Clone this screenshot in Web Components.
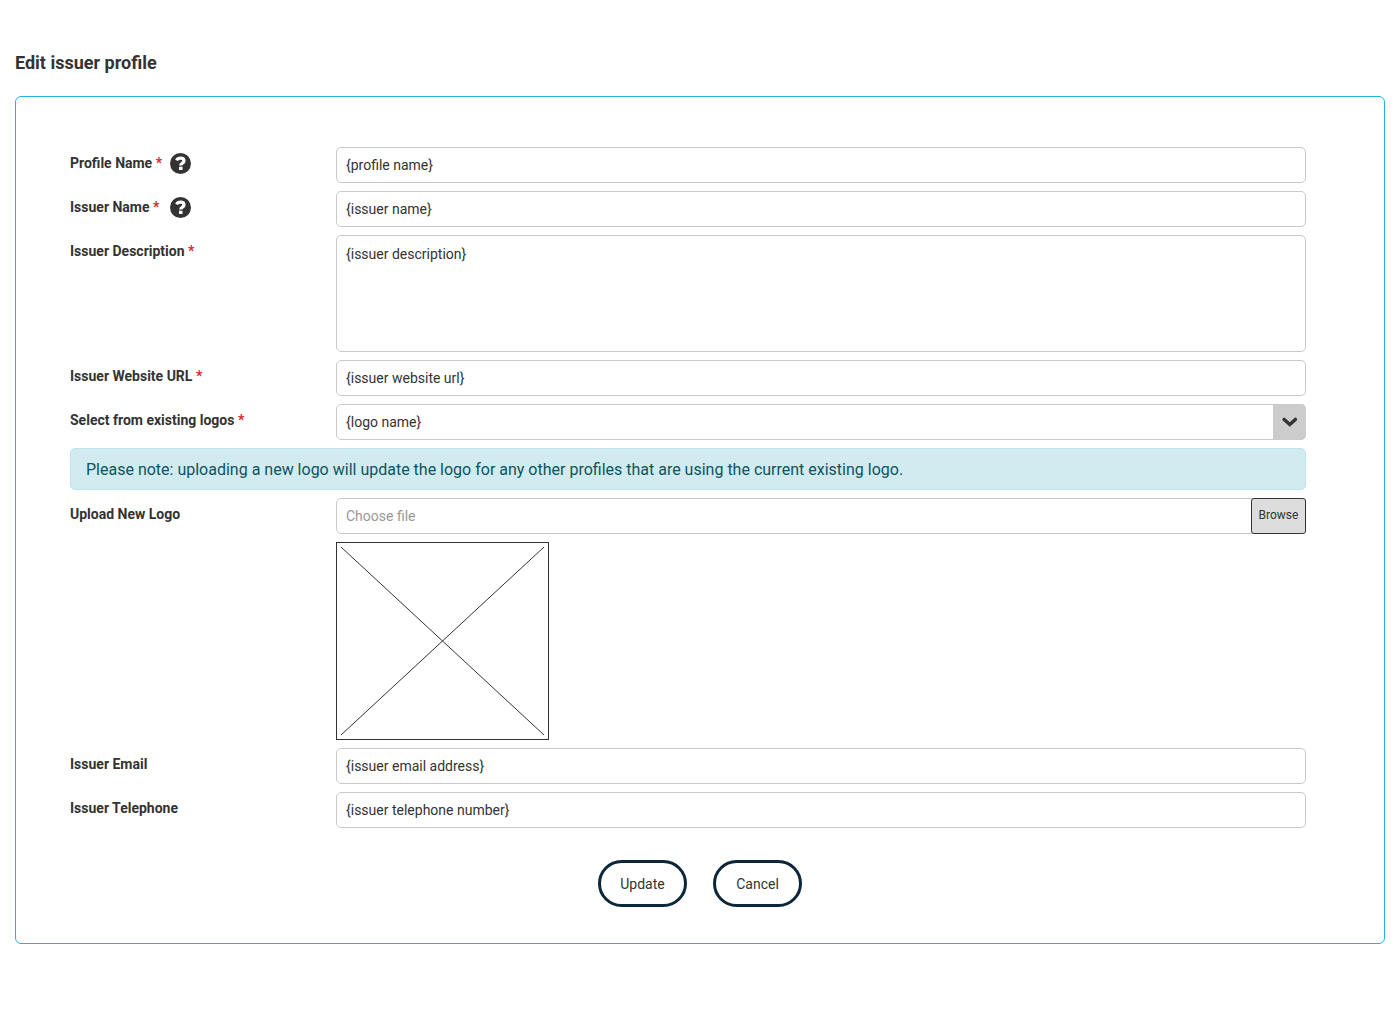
<!DOCTYPE html>
<html lang="en">
<head>
<meta charset="utf-8">
<meta name="viewport" content="width=device-width, initial-scale=1">
<title>Edit issuer profile</title>
<style>
  body { margin: 0; background: #fff; color: #333; font: 14px/20px Roboto, "Liberation Sans", sans-serif; }
</style>
</head>
<body>
<issuer-page heading="Edit issuer profile">
  <form-field label="Profile Name" value="{profile name}" required help></form-field>
  <form-field label="Issuer Name" value="{issuer name}" required help></form-field>
  <form-field label="Issuer Description" kind="textarea" value="{issuer description}" required></form-field>
  <form-field label="Issuer Website URL" value="{issuer website url}" required></form-field>
  <form-field label="Select from existing logos" kind="select" value="{logo name}" required></form-field>
  <info-note>Please note: uploading a new logo will update the logo for any other profiles that are using the current existing logo.</info-note>
  <form-field label="Upload New Logo" kind="file" placeholder="Choose file"><logo-preview></logo-preview></form-field>
  <form-field label="Issuer Email" value="{issuer email address}"></form-field>
  <form-field label="Issuer Telephone" value="{issuer telephone number}"></form-field>
  <pill-button slot="actions">Update</pill-button>
  <pill-button slot="actions">Cancel</pill-button>
</issuer-page>

<script>
class IssuerPage extends HTMLElement {
  connectedCallback() {
    const root = this.attachShadow({ mode: 'open' });
    root.innerHTML = `
      <style>
        :host { display: block; padding: 51px 15px; }
        h1 { margin: 0 0 21px; font-size: 18px; line-height: 24px; font-weight: 700; }
        form { display: flex; flex-direction: column; gap: 32px; padding: 50px 78px 36px 54px; border: 1px solid #1fb4e2; border-radius: 6px; }
        .fields { display: flex; flex-direction: column; gap: 8px; }
        .actions { display: flex; justify-content: center; gap: 26px; margin-left: -54px; margin-right: -78px; }
      </style>
      <h1></h1>
      <form>
        <div class="fields"><slot></slot></div>
        <div class="actions"><slot name="actions"></slot></div>
      </form>`;
    root.querySelector('h1').textContent = this.getAttribute('heading');
  }
}

class FormField extends HTMLElement {
  connectedCallback() {
    const root = this.attachShadow({ mode: 'open' });
    root.innerHTML = `
      <style>
        :host { display: flex; align-items: flex-start; }
        * { box-sizing: border-box; }
        .caption { display: flex; align-items: center; flex: 0 0 266px; height: 32px; }
        label { min-width: 100px; font-weight: 700; }
        .star { color: #d9272e; }
        .content { display: flex; flex-direction: column; gap: 8px; flex: 1; min-width: 0; }
        .control { display: grid; }
        .control > * { grid-row: 1; grid-column: 1; }
        input, textarea, select {
          display: block; width: 100%; height: 36px; margin: 0; padding: 0 9px;
          font: inherit; color: inherit; background: #fff;
          border: 1px solid #c9c9c9; border-radius: 5px; appearance: none; outline-offset: 1px;
        }
        textarea { height: 117px; padding: 8px 9px; resize: none; }
        input::placeholder { color: #999; opacity: 1; }
        .arrow { justify-self: end; width: 33px; display: flex; align-items: center; justify-content: center; background: #ccc; border-radius: 0 5px 5px 0; pointer-events: none; }
        .browse { justify-self: end; width: 55px; height: 36px; padding: 0 0 2px; font: inherit; font-size: 12px; color: #333; background: #ddd; border: 1px solid #333; border-radius: 3px; }
        .help { display: flex; width: 21px; height: 21px; padding: 0; border: 0; background: none; }
        svg { display: block; }
      </style>
      <div class="caption"><label for="control"></label></div>
      <div class="content"><div class="control"></div><slot></slot></div>`;
    const kind = this.getAttribute('kind') || 'input';
    const label = root.querySelector('label');
    label.textContent = this.getAttribute('label');
    if (this.hasAttribute('required')) label.insertAdjacentHTML('beforeend', ' <span class="star">*</span>');
    if (this.hasAttribute('help')) label.insertAdjacentHTML('afterend', `
      <button class="help" type="button" aria-label="Help">
        <svg width="21" height="21" viewBox="0 0 21 21"><circle cx="10.5" cy="10.5" r="10.5" fill="#333"/>
        <path d="M6.6 7.4C7.3 5.9 8.6 5.2 10.5 5.2C12.6 5.2 14 6.2 14 7.9C14 10.3 10.7 9.9 10.7 12.6" fill="none" stroke="#fff" stroke-width="3.2"/>
        <rect x="9" y="13.7" width="3.5" height="3.3" fill="#fff"/></svg>
      </button>`);
    const box = root.querySelector('.control');
    const control = document.createElement(kind === 'file' ? 'input' : kind);
    control.id = 'control';
    const value = this.getAttribute('value') || '';
    if (kind === 'select') {
      control.add(new Option(value));
      box.append(control);
      box.insertAdjacentHTML('beforeend', `<span class="arrow"><svg width="15" height="10" viewBox="0 0 15 10"><path d="M2.2 2.4L7.8 7.4L13.4 2.4" fill="none" stroke="#333" stroke-width="3.4" stroke-linecap="round"/></svg></span>`);
    } else {
      control.value = value;
      box.append(control);
    }
    if (kind === 'file') {
      control.placeholder = this.getAttribute('placeholder');
      control.readOnly = true;
      box.insertAdjacentHTML('beforeend', '<button class="browse" type="button">Browse</button>');
    }
  }
}

class InfoNote extends HTMLElement {
  connectedCallback() {
    this.attachShadow({ mode: 'open' }).innerHTML = `
      <style>:host { display: block; padding: 9px 15px 7px; font-size: 16px; line-height: 24px; color: #0c5460; background: #d1ebf0; border: 1px solid #bee5eb; border-radius: 5px; }</style>
      <slot></slot>`;
  }
}

class LogoPreview extends HTMLElement {
  connectedCallback() {
    this.attachShadow({ mode: 'open' }).innerHTML = `
      <style>:host { display: block; } svg { display: block; }</style>
      <svg width="213" height="198" viewBox="0 0 213 198" fill="none" stroke="#333" role="img" aria-label="Logo preview">
        <rect x=".5" y=".5" width="212" height="197"/><path d="M5 5L208 193M208 5L5 193"/>
      </svg>`;
  }
}

class PillButton extends HTMLElement {
  connectedCallback() {
    this.attachShadow({ mode: 'open' }).innerHTML = `
      <style>
        :host { display: block; }
        button { display: block; min-width: 89px; height: 47px; padding: 0 19px; font: inherit; color: #333; background: #fff; border: 3px solid #0b2739; border-radius: 24px; }
      </style>
      <button type="button"><slot></slot></button>`;
  }
}

customElements.define('issuer-page', IssuerPage);
customElements.define('form-field', FormField);
customElements.define('info-note', InfoNote);
customElements.define('logo-preview', LogoPreview);
customElements.define('pill-button', PillButton);
</script>
</body>
</html>
